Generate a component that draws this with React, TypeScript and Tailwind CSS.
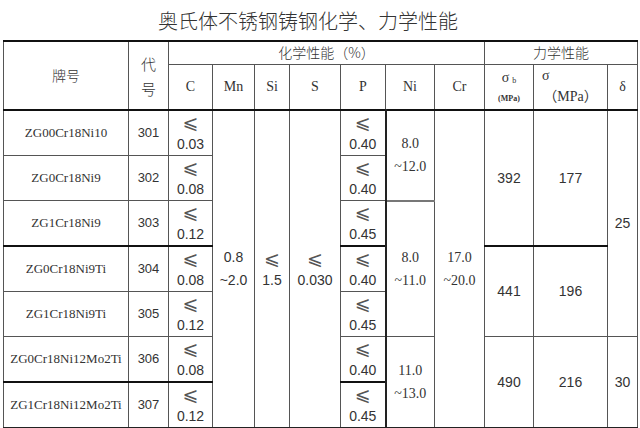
import React from 'react';

// 奥氏体不锈钢铸钢 — composition / mechanical property table
const LE = '⩽';

const serif = "font-['Liberation_Serif','Noto_Sans_CJK_SC',serif]";
const sans = "font-['Liberation_Sans','DejaVu_Sans',sans-serif]";
const cjk = "font-['Noto_Sans_CJK_SC',sans-serif] font-light";
const leGlyph = "font-['DejaVu_Sans',sans-serif] text-[19px] leading-[22px] text-[#555]";

const td = 'p-0 border border-[#555] text-center align-middle text-[#333]';
const thickTop = 'border-t-2 border-t-[#111]';

function LeCell({ value, className = '' }: { value: string; className?: string }) {
  return (
    <td className={`${td} ${className}`}>
      <div className="flex flex-col items-center leading-[22px]">
        <span className={leGlyph}>{LE}</span>
        <span className={`${sans} text-[14px]`}>{value}</span>
      </div>
    </td>
  );
}

function Range({ lo, hi, font = serif }: { lo: string; hi: string; font?: string }) {
  return (
    <div className={`flex flex-col items-center leading-[23px] text-[14px] ${font}`}>
      <span>{lo}</span>
      <span>{hi}</span>
    </div>
  );
}

export default function App() {
  return (
    <div className="w-[640px] h-[428px] bg-white overflow-hidden">
      <div className={`h-[40px] flex items-center justify-center pr-[24px] pt-[1px] text-[20px] text-[#333] ${cjk}`}>
        奥氏体不锈钢铸钢化学、力学性能
      </div>
      <table className="table-fixed border-collapse ml-[3px] w-[634px] border-t-2 border-t-[#111] border-b-2 border-b-[#222] border-l border-l-[#999]">
        <colgroup>
          <col className="w-[125px]" />
          <col className="w-[40px]" />
          <col className="w-[44px]" />
          <col className="w-[42px]" />
          <col className="w-[35px]" />
          <col className="w-[51px]" />
          <col className="w-[45px]" />
          <col className="w-[49px]" />
          <col className="w-[50px]" />
          <col className="w-[49px]" />
          <col className="w-[74px]" />
          <col className="w-[30px]" />
        </colgroup>
        <thead>
          <tr className="h-[23px]">
            <td rowSpan={2} className={`${td} ${cjk} text-[14px] border-t-2 border-t-[#111]`}>牌号</td>
            <td rowSpan={2} className={`${td} ${cjk} text-[15px] leading-[25px] border-t-2 border-t-[#111]`}>
              代<br />号
            </td>
            <td colSpan={7} className={`${td} ${cjk} text-[14px] border-t-2 border-t-[#111]`}>化学性能（%）</td>
            <td colSpan={3} className={`${td} ${cjk} text-[14px] border-t-2 border-t-[#111]`}>力学性能</td>
          </tr>
          <tr className="h-[46px]">
            <td className={`${td} ${serif} text-[14px]`}>C</td>
            <td className={`${td} ${serif} text-[14px]`}>Mn</td>
            <td className={`${td} ${serif} text-[14px]`}>Si</td>
            <td className={`${td} ${serif} text-[14px]`}>S</td>
            <td className={`${td} ${serif} text-[14px]`}>P</td>
            <td className={`${td} ${serif} text-[14px]`}>Ni</td>
            <td className={`${td} ${serif} text-[14px]`}>Cr</td>
            <td className={`${td} ${serif}`}>
              <div className="flex flex-col items-center">
                <span className="text-[14px] leading-[22px]">
                  σ<sub className="text-[8px] ml-[3px] align-baseline relative top-[1px]">b</sub>
                </span>
                <span className="text-[8px] font-bold leading-[16px] pt-[2px]">(MPa)</span>
              </div>
            </td>
            <td className={`${td} ${serif}`}>
              <div className="flex flex-col">
                <span className="text-[14px] leading-[20px] text-left pl-[8px]">σ</span>
                <span className={`text-[14px] leading-[22px] text-center ${serif}`}>（MPa）</span>
              </div>
            </td>
            <td className={`${td} ${serif} text-[14px]`}>δ</td>
          </tr>
        </thead>
        <tbody>
          <tr className="h-[45px]">
            <td className={`${td} ${serif} text-[13px] ${thickTop}`}>ZG00Cr18Ni10</td>
            <td className={`${td} ${sans} text-[13px] ${thickTop}`}>301</td>
            <LeCell value="0.03" className={thickTop} />
            <td rowSpan={7} className={`${td} ${thickTop}`}>
              <Range lo="0.8" hi="~2.0" font={sans} />
            </td>
            <td rowSpan={7} className={`${td} ${thickTop}`}>
              <div className="flex flex-col items-center leading-[22px]">
                <span className={leGlyph}>{LE}</span>
                <span className={`${sans} text-[14px]`}>1.5</span>
              </div>
            </td>
            <td rowSpan={7} className={`${td} ${thickTop}`}>
              <div className="flex flex-col items-center leading-[22px]">
                <span className={leGlyph}>{LE}</span>
                <span className={`${sans} text-[14px]`}>0.030</span>
              </div>
            </td>
            <LeCell value="0.40" className={`${thickTop} border-r-2 border-r-[#222]`} />
            <td rowSpan={2} className={`${td} ${thickTop}`}>
              <Range lo="8.0" hi="~12.0" />
            </td>
            <td rowSpan={7} className={`${td} ${thickTop}`}>
              <Range lo="17.0" hi="~20.0" />
            </td>
            <td rowSpan={3} className={`${td} ${sans} text-[14px] ${thickTop}`}>392</td>
            <td rowSpan={3} className={`${td} ${sans} text-[14px] ${thickTop}`}>177</td>
            <td rowSpan={5} className={`${td} ${sans} text-[14px] ${thickTop}`}>25</td>
          </tr>
          <tr className="h-[45px]">
            <td className={`${td} ${serif} text-[13px]`}>ZG0Cr18Ni9</td>
            <td className={`${td} ${sans} text-[13px]`}>302</td>
            <LeCell value="0.08" />
            <LeCell value="0.40" className="border-r-2 border-r-[#222]" />
          </tr>
          <tr className="h-[45px]">
            <td className={`${td} ${serif} text-[13px]`}>ZG1Cr18Ni9</td>
            <td className={`${td} ${sans} text-[13px]`}>303</td>
            <LeCell value="0.12" />
            <LeCell value="0.45" className="border-r-2 border-r-[#222]" />
            <td rowSpan={3} className={`${td} border-t-2 border-t-[#777]`}>
              <Range lo="8.0" hi="~11.0" />
            </td>
          </tr>
          <tr className="h-[45px]">
            <td className={`${td} ${serif} text-[13px] ${thickTop}`}>ZG0Cr18Ni9Ti</td>
            <td className={`${td} ${sans} text-[13px] ${thickTop}`}>304</td>
            <LeCell value="0.08" className={thickTop} />
            <LeCell value="0.40" className={`${thickTop} border-r-2 border-r-[#222]`} />
            <td rowSpan={2} className={`${td} ${sans} text-[14px] ${thickTop}`}>441</td>
            <td rowSpan={2} className={`${td} ${sans} text-[14px] ${thickTop}`}>196</td>
          </tr>
          <tr className="h-[44px]">
            <td className={`${td} ${serif} text-[13px]`}>ZG1Cr18Ni9Ti</td>
            <td className={`${td} ${sans} text-[13px]`}>305</td>
            <LeCell value="0.12" />
            <LeCell value="0.45" className="border-r-2 border-r-[#222]" />
          </tr>
          <tr className="h-[45px]">
            <td className={`${td} ${serif} text-[13px]`}>ZG0Cr18Ni12Mo2Ti</td>
            <td className={`${td} ${sans} text-[13px]`}>306</td>
            <LeCell value="0.08" />
            <LeCell value="0.40" className="border-r-2 border-r-[#222]" />
            <td rowSpan={2} className={`${td}`}>
              <Range lo="11.0" hi="~13.0" />
            </td>
            <td rowSpan={2} className={`${td} ${sans} text-[14px]`}>490</td>
            <td rowSpan={2} className={`${td} ${sans} text-[14px]`}>216</td>
            <td rowSpan={2} className={`${td} ${sans} text-[14px]`}>30</td>
          </tr>
          <tr className="h-[45px]">
            <td className={`${td} ${serif} text-[13px] ${thickTop}`}>ZG1Cr18Ni12Mo2Ti</td>
            <td className={`${td} ${sans} text-[13px] ${thickTop}`}>307</td>
            <LeCell value="0.12" className={thickTop} />
            <LeCell value="0.45" className={`${thickTop} border-r-2 border-r-[#222]`} />
          </tr>
        </tbody>
      </table>
    </div>
  );
}
